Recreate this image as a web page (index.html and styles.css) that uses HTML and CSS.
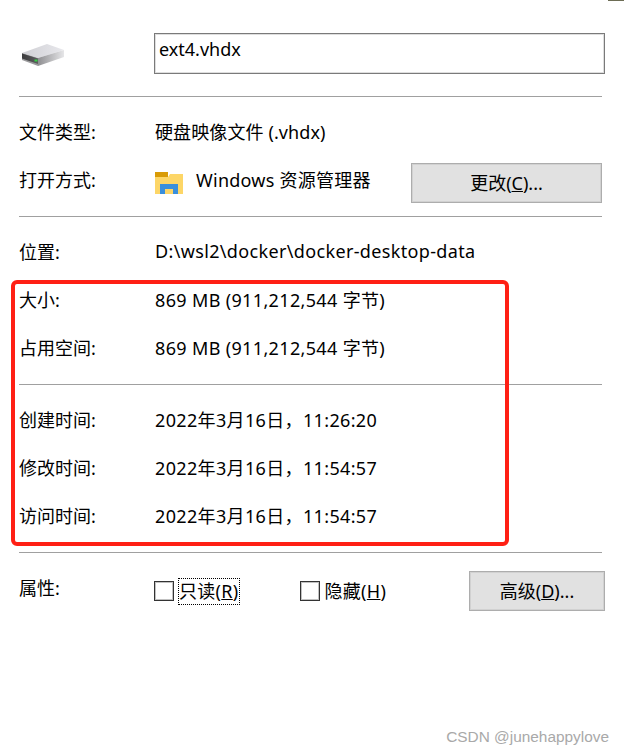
FILE: index.html
```html
<!DOCTYPE html>
<html lang="zh-CN">
<head>
    <meta charset="UTF-8">
    <meta name="viewport" content="width=device-width, initial-scale=1.0">
    <title>ext4.vhdx 属性</title>
    <link rel="stylesheet" href="styles.css">
</head>
<body>
    <div class="corner"></div>
    <div class="panel">
        <div class="name-row">
            <svg class="drive-icon" width="42" height="23" viewBox="0 0 42 23">
                <defs>
                    <linearGradient id="driveTop" x1="0" y1="0" x2="1" y2="0">
                        <stop offset="0" stop-color="#cfcfd4"/>
                        <stop offset="1" stop-color="#e8e8ec"/>
                    </linearGradient>
                    <linearGradient id="driveFront" x1="0" y1="0" x2="1" y2="0">
                        <stop offset="0" stop-color="#3c3c3e"/>
                        <stop offset="1" stop-color="#5c5c5e"/>
                    </linearGradient>
                    <linearGradient id="driveSide" x1="0" y1="0" x2="1" y2="0">
                        <stop offset="0" stop-color="#8f8f92"/>
                        <stop offset="1" stop-color="#e6e6e8"/>
                    </linearGradient>
                </defs>
                <path d="M0 9 L25 0 L42 6 L16 14 Z" fill="url(#driveTop)"/>
                <path d="M0 9 L16 14 L16 22 L0 16 Z" fill="#9a9a9c"/>
                <path d="M0 9.5 L16 14.5 L16 20 L0 14.5 Z" fill="url(#driveFront)"/>
                <path d="M16 14 L42 6 L42 13 L16 22 Z" fill="url(#driveSide)"/>
                <rect x="12.5" y="15.5" width="3" height="2" fill="#35d045"/>
            </svg>
            <div class="name-box">ext4.vhdx</div>
        </div>

        <div class="group">
            <div class="row"><span>文件类型:</span><span class="value value-type">硬盘映像文件 (.vhdx)</span></div>
            <div class="row">
                <span>打开方式:</span>
                <div class="opener">
                    <svg class="folder-icon" width="28" height="22" viewBox="0 0 28 22">
                        <path d="M0 0 H13 V5 H0 Z" fill="#d99b06"/>
                        <path d="M0 5 H13 L15 2 H28 V22 H0 Z" fill="#fdd667"/>
                        <path d="M5 22 V12 H23 V22 H18 V17 H10 V22 Z" fill="#3a8fdc"/>
                    </svg>
                    <span class="value value-app">Windows 资源管理器</span>
                    <button class="btn btn-change">更改(<u>C</u>)...</button>
                </div>
            </div>
        </div>

        <div class="group">
            <div class="row"><span>位置:</span><span class="value">D:\wsl2\docker\docker-desktop-data</span></div>
            <div class="row"><span>大小:</span><span class="value">869 MB (911,212,544 字节)</span></div>
            <div class="row"><span>占用空间:</span><span class="value">869 MB (911,212,544 字节)</span></div>
        </div>

        <div class="group">
            <div class="row"><span>创建时间:</span><span class="value">2022年3月16日，11:26:20</span></div>
            <div class="row"><span>修改时间:</span><span class="value">2022年3月16日，11:54:57</span></div>
            <div class="row"><span>访问时间:</span><span class="value">2022年3月16日，11:54:57</span></div>
        </div>

        <div class="row attrs">
            <span class="attrs-label">属性:</span>
            <div class="attrs-controls">
                <span class="check"></span>
                <span class="check-text focused">只读(<u>R</u>)</span>
                <span class="check check-second"></span>
                <span class="check-text">隐藏(<u>H</u>)</span>
                <button class="btn btn-advanced">高级(<u>D</u>)...</button>
            </div>
        </div>
    </div>

    <div class="highlight"></div>
    <div class="watermark">CSDN @junehappylove</div>
</body>
</html>
```

FILE: styles.css
```css
body {
    margin: 0;
    height: 753px;
    overflow: hidden;
    background-color: #fff;
    color: #000;
    font-family: "Noto Sans", "Noto Sans CJK SC", sans-serif;
    font-size: 18px;
}

.panel {
    padding-left: 19px;
    padding-right: 22px;
}

.name-row {
    display: flex;
    height: 97px;
    box-sizing: border-box;
    padding-top: 33px;
    border-bottom: 1px solid #a0a0a0;
}

.drive-icon {
    margin: 11px 0 0 3px;
    flex: none;
}

.name-box {
    width: 451px;
    height: 41px;
    margin-left: 90px;
    padding: 0 4px;
    box-sizing: border-box;
    border: 1px solid #7a7a7a;
    box-shadow: inset 0 0 0 1px rgba(122, 122, 122, 0.25);
    line-height: 30px;
    flex: none;
}

.group {
    padding: 12px 0 11px;
    border-bottom: 1px solid #a0a0a0;
}

.row {
    display: grid;
    grid-template-columns: 136px 1fr;
    align-items: center;
    height: 48px;
    box-sizing: border-box;
    padding-bottom: 4px;
}

.value {
    letter-spacing: 0.35px;
}

.value-type {
    letter-spacing: 0.1px;
}

.value-app {
    letter-spacing: 0.25px;
}

.opener {
    display: flex;
    align-items: center;
    height: 44px;
}

.folder-icon {
    flex: none;
    margin-top: 8px;
}

.opener .value {
    margin-left: 13px;
}

.btn {
    height: 40px;
    padding: 0 0 2px;
    border: 1px solid #adadad;
    box-shadow: inset 0 0 0 1px rgba(173, 173, 173, 0.3);
    background-color: #e1e1e1;
    color: #000;
    font-family: inherit;
    font-size: 18px;
    margin-left: auto;
}

.btn-change {
    width: 191px;
    margin-top: 8px;
}

.attrs {
    margin-top: 12px;
    align-items: start;
    padding-bottom: 0;
}

.attrs-label {
    line-height: 46px;
}

.attrs-controls {
    display: flex;
    align-items: center;
    margin-top: 6px;
    margin-right: -3px;
    margin-left: -1px;
}

.check {
    width: 20px;
    height: 20px;
    box-sizing: border-box;
    border: 1px solid #333;
    box-shadow: inset 0 0 0 1px rgba(51, 51, 51, 0.3);
    flex: none;
}

.check-second {
    margin-left: 61px;
}

.check-text {
    margin-left: 5px;
    line-height: 25px;
    letter-spacing: 0.3px;
}

.focused {
    outline: 1px dotted #000;
}

.btn-advanced {
    width: 136px;
}

.highlight {
    position: absolute;
    left: 11px;
    top: 280px;
    width: 498px;
    height: 266px;
    box-sizing: border-box;
    border: 4px solid #ff2015;
    border-radius: 6px;
}

.corner {
    position: absolute;
    left: 608px;
    top: 0;
    width: 16px;
    height: 1px;
    background-color: #6d6d55;
}

.watermark {
    position: absolute;
    right: 15px;
    top: 728px;
    color: #a9a9a9;
    font-family: "Liberation Sans", Arial, sans-serif;
    font-size: 15.4px;
}
```
